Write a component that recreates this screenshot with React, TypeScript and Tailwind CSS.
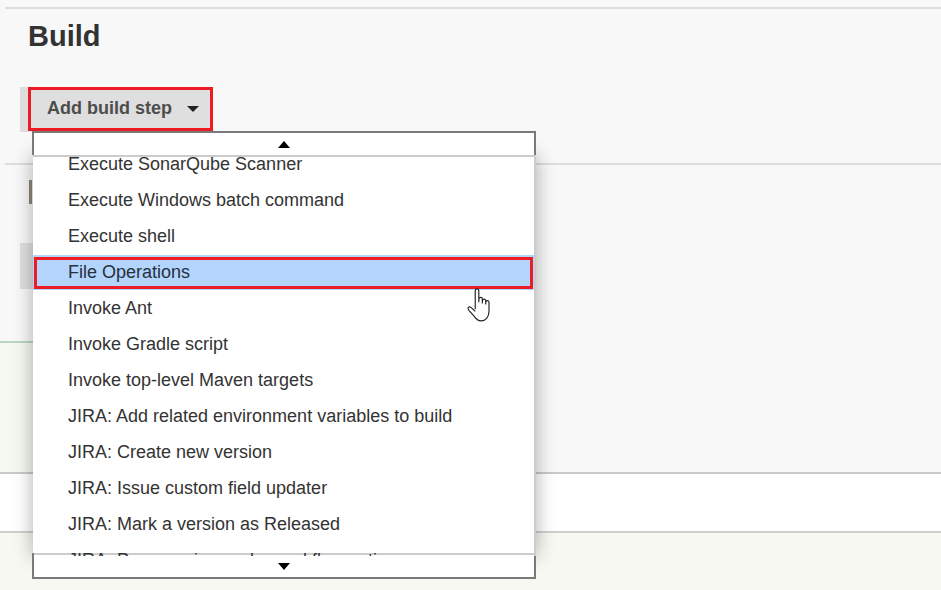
const items = [
  "Invoke Ant",
  "Invoke Gradle script",
  "Invoke top-level Maven targets",
  "JIRA: Add related environment variables to build",
  "JIRA: Create new version",
  "JIRA: Issue custom field updater",
  "JIRA: Mark a version as Released",
  "JIRA: Progress issues by workflow action",
];

function Row({ label }: { label: string }) {
  return <div className="relative flex h-9 shrink-0 items-center pl-[35px] text-[#333]">{label}</div>;
}

function HandCursor() {
  return (
    <svg width="30" height="36" viewBox="0 0 28 34" className="absolute left-[465px] top-[287px]">
      <path
        d="M9.5 21V3.5a1.700 1.700 0 0 1 3.400 0V14l.1-2.600a1.600 1.600 0 0 1 3.200 0V15l.1-2.400a1.600 1.600 0 0 1 3.100 0V16l.1-1.600a1.500 1.500 0 0 1 3 0V23c0 5-3 9-7.500 9-3.500 0-5-2-7-5L3.500 22c-1-1.500-1-2.500-.2-3 1-.6 2-.1 3 1l3.200 3"
        fill="#fff"
        stroke="#222"
        strokeWidth="1.1"
        strokeLinejoin="round"
      />
    </svg>
  );
}

export default function App() {
  return (
    <div className="relative h-[590px] w-[941px] overflow-hidden bg-[#f8f8f8] font-['Liberation_Sans',Arial,sans-serif] text-[18px]">
      <div className="mt-[7px] ml-[5px] h-[2px] bg-[#dcdcdc]" />
      <h1 className="mt-[8px] ml-[28px] text-[29px] leading-[38px] font-bold text-[#333]">Build</h1>

      <div className="mt-[32px] ml-5 flex h-[45px] w-[193px] bg-[#dedede]">
        <div className="ml-2 flex h-[44px] w-[185px] items-center border-[3px] border-[#ed1c24] bg-[#dfdfdf] pb-[2px] pl-[16px] font-bold text-[#4d4d4d]">
          Add build step
          <span className="mt-[2px] ml-[15px] h-0 w-0 border-x-[6px] border-t-[6px] border-x-transparent border-t-[#222]" />
        </div>
      </div>

      <div className="mt-[31px] ml-[5px] h-[2px] bg-[#dcdcdc]" />

      <div className="mt-[15px] ml-[29px] h-[24px] w-[3px] bg-[#8f8578]" />
      <div className="mt-[39px] ml-5 h-[46px] w-[13px] bg-[#e0e0e0]" />

      <div className="mt-[52px] h-[131px] w-[300px] border-t-2 border-t-[#b9d6c4] bg-[#f5f8f1]" />
      <div className="h-[2px] bg-[#c9c9c9]" />
      <div className="h-[57px] bg-white" />
      <div className="h-[2px] bg-[#cfcfcf]" />
      <div className="h-[57px] bg-[#f6f8f1]" />

      {/* dropdown list, sits over the page */}
      <div className="absolute left-[33px] top-[155px] h-[401px] w-[503px] overflow-hidden border-r-2 border-r-[#cccccc] bg-white shadow-[0_0_18px_rgba(0,0,0,0.32)]">
        <div className="absolute left-0 right-0 top-0 h-[2px] bg-[#cccccc]" />
        <div className="absolute left-0 right-0 top-[398px] h-[2px] bg-[#cccccc]" />
        <div className="-mt-[9px] flex flex-col">
          <Row label="Execute SonarQube Scanner" />
          <Row label="Execute Windows batch command" />
          <Row label="Execute shell" />
          <div className="h-9 shrink-0 pt-px">
            <div className="h-[35px] bg-[#b3d4fd] px-px pt-[2px]">
              <div className="flex h-[32px] items-center border-[3px] border-[#ed1c24] bg-[#b3d4fd] pb-[2px] pl-[31px] text-[#26303c]">
                File Operations
              </div>
            </div>
          </div>
          {items.map((label) => (
            <Row key={label} label={label} />
          ))}
        </div>
      </div>

      {/* scroll arrows above and below the list */}
      <div className="absolute left-[32px] top-[131px] flex h-[24px] w-[504px] items-center justify-center border-x-2 border-t-2 border-[#7a7a7a] bg-white">
        <span className="h-0 w-0 border-x-[6px] border-b-[7px] border-x-transparent border-b-black" />
      </div>
      <div className="absolute left-[32px] top-[556px] flex h-[23px] w-[504px] items-center justify-center border-x-2 border-b-2 border-[#7a7a7a] bg-white">
        <span className="h-0 w-0 border-x-[6px] border-t-[7px] border-x-transparent border-t-black" />
      </div>
      <div className="absolute left-[32px] top-[553px] h-[3px] w-[2px] bg-[#7a7a7a]" />

      <HandCursor />
    </div>
  );
}
